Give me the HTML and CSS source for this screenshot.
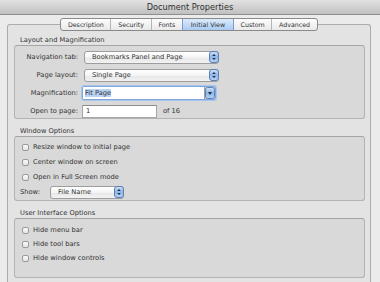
FILE: index.html
```html
<!DOCTYPE html>
<html>
<head>
    <title>Document Properties</title>
    <meta charset="UTF-8">
    <link rel="stylesheet" href="styles.css">
</head>
<body>
    <div class="titlebar">Document Properties</div>

    <div class="window">
        <div class="tabs">
            <span class="tab">Description</span>
            <span class="tab">Security</span>
            <span class="tab">Fonts</span>
            <span class="tab selected">Initial View</span>
            <span class="tab">Custom</span>
            <span class="tab">Advanced</span>
        </div>

        <div class="panel">
            <div class="group-label">Layout and Magnification</div>
            <div class="group layout">
                <div class="field">
                    <label>Navigation tab:</label>
                    <div class="popup wide">
                        <span>Bookmarks Panel and Page</span>
                        <svg class="stepper" width="10" height="12" viewBox="0 0 10 12"><rect x="0.5" y="0.5" width="9" height="11" rx="2.5" fill="url(#blue)" stroke="#5a80b8"/><path d="M3.2 5L5 3l1.8 2zM3.2 7L5 9l1.8-2z" fill="#1c2f4f"/></svg>
                    </div>
                </div>
                <div class="field">
                    <label>Page layout:</label>
                    <div class="popup wide">
                        <span>Single Page</span>
                        <svg class="stepper" width="10" height="12" viewBox="0 0 10 12"><rect x="0.5" y="0.5" width="9" height="11" rx="2.5" fill="url(#blue)" stroke="#5a80b8"/><path d="M3.2 5L5 3l1.8 2zM3.2 7L5 9l1.8-2z" fill="#1c2f4f"/></svg>
                    </div>
                </div>
                <div class="field">
                    <label>Magnification:</label>
                    <div class="combo">
                        <span class="combo-text"><span class="highlight">Fit Page</span></span>
                        <svg class="stepper" width="10" height="12" viewBox="0 0 10 12"><rect x="0.5" y="0.5" width="9" height="11" rx="2" fill="url(#blue)" stroke="#5a80b8"/><path d="M3 5h4L5 8z" fill="#1c2f4f"/></svg>
                    </div>
                </div>
                <div class="field">
                    <label>Open to page:</label>
                    <div class="textbox">1</div>
                    <span class="suffix">of 16</span>
                </div>
            </div>

            <div class="group-label">Window Options</div>
            <div class="group options">
                <div class="check"><span class="box"></span>Resize window to initial page</div>
                <div class="check"><span class="box"></span>Center window on screen</div>
                <div class="check"><span class="box"></span>Open in Full Screen mode</div>
                <div class="show-row">
                    <label>Show:</label>
                    <div class="popup narrow">
                        <span>File Name</span>
                        <svg class="stepper" width="10" height="12" viewBox="0 0 10 12"><rect x="0.5" y="0.5" width="9" height="11" rx="2.5" fill="url(#blue)" stroke="#5a80b8"/><path d="M3.2 5L5 3l1.8 2zM3.2 7L5 9l1.8-2z" fill="#1c2f4f"/></svg>
                    </div>
                </div>
            </div>

            <div class="group-label">User Interface Options</div>
            <div class="group ui">
                <div class="check"><span class="box"></span>Hide menu bar</div>
                <div class="check"><span class="box"></span>Hide tool bars</div>
                <div class="check"><span class="box"></span>Hide window controls</div>
            </div>
        </div>
    </div>

    <svg width="0" height="0" class="defs">
        <defs>
            <linearGradient id="blue" x1="0" y1="0" x2="0" y2="1">
                <stop offset="0" stop-color="#d3e3f8"/>
                <stop offset="0.5" stop-color="#8fb4e6"/>
                <stop offset="1" stop-color="#b9d3f3"/>
            </linearGradient>
        </defs>
    </svg>
</body>
</html>
```

FILE: styles.css
```css
:root {
    --text-color: #323232;
    --group-bg: #d9d9d9;
    --group-border: #b3b3b3;
    --panel-bg: #e3e3e3;
}

html, body {
    margin: 0;
    padding: 0;
}

body {
    width: 380px;
    height: 282px;
    overflow: hidden;
    background: #ebebeb;
    font-family: "DejaVu Sans", Verdana, sans-serif;
    font-size: 6.7px;
    color: var(--text-color);
}

.defs {
    position: absolute;
    top: 0;
    left: 0;
}

.titlebar {
    height: 14px;
    line-height: 14px;
    text-align: center;
    font-size: 8.2px;
    color: #303030;
    background: linear-gradient(#e2e2e2, #c0c0c0);
    border-bottom: 1px solid #8e8e8e;
}

.window {
    padding: 3px 9px 0 7px;
}

.tabs {
    position: relative;
    z-index: 1;
    display: flex;
    width: fit-content;
    margin: 0 auto;
    height: 11px;
    font-size: 6.3px;
    border: 1px solid #8a8a8a;
    border-radius: 3px;
    background: linear-gradient(#fdfdfd, #e9e9e9);
    overflow: hidden;
}

.tab {
    line-height: 11px;
    padding: 0 6.7px;
    border-left: 1px solid #b5b5b5;
}

.tab:first-child {
    border-left: none;
}

.tab.selected {
    padding: 0 7.7px;
    background: linear-gradient(#dcebfc, #a9cbf2);
    border-left-color: #7d9ccc;
}

.tab.selected + .tab {
    border-left-color: #7d9ccc;
}

.panel {
    box-sizing: border-box;
    margin-top: -7px;
    height: 258px;
    padding: 7px 5px 0 6px;
    background: var(--panel-bg);
    border: 1px solid #ababab;
    border-bottom: none;
    border-radius: 3px 3px 0 0;
}

.group-label {
    line-height: 10px;
    padding: 3px 0 0 6px;
    margin-top: 4px;
}

.group-label:first-child {
    margin-top: 0;
}

.group {
    background: var(--group-bg);
    border: 1px solid var(--group-border);
    border-top-color: #a5a5a5;
    border-radius: 3px;
    padding: 4px 0 0;
    display: flex;
    flex-direction: column;
}

.layout {
    height: 68px;
    gap: 4px;
}

.options {
    height: 60px;
    padding-top: 3px;
    gap: 1px;
}

.ui {
    height: 54px;
}

.field {
    height: 14px;
    display: flex;
    align-items: center;
}

.field label {
    width: 63px;
    text-align: right;
    margin-right: 4px;
}

.popup {
    height: 11px;
    display: flex;
    align-items: center;
    justify-content: space-between;
    border: 1px solid #9d9d9d;
    border-radius: 3px;
    background: linear-gradient(#ffffff, #f4f4f4 50%, #e6e6e6 51%, #f3f3f3);
    padding-left: 7px;
}

.popup span {
    line-height: 11px;
}

.popup.wide {
    width: 126px;
    margin-left: 2px;
}

.popup.narrow {
    width: 65px;
}

.popup .stepper {
    margin-right: -1px;
}

.combo {
    width: 132px;
    height: 12px;
    display: flex;
    align-items: center;
    border: 1px solid #7fa7dc;
    border-radius: 2px;
    box-shadow: 0 0 0 1px #a9c6ee;
}

.combo-text {
    flex: 1;
    height: 12px;
    line-height: 12px;
    background: #ffffff;
    border-right: 1px solid #9d9d9d;
    padding-left: 2px;
}

.highlight {
    background: #b8d3f5;
}

.textbox {
    width: 70px;
    height: 11px;
    line-height: 11px;
    padding-left: 3px;
    background: #ffffff;
    border: 1px solid #a6a6a6;
    border-top-color: #8c8c8c;
}

.suffix {
    margin-left: 6px;
}

.check {
    height: 14px;
    display: flex;
    align-items: center;
    padding-left: 7px;
}

.box {
    width: 5px;
    height: 5px;
    margin-right: 4px;
    border: 1px solid #9a9a9a;
    border-radius: 2px;
    background: linear-gradient(#fafafa, #e4e4e4);
}

.show-row {
    height: 14px;
    display: flex;
    align-items: center;
    padding-left: 5px;
}

.show-row label {
    width: 30px;
}
```
